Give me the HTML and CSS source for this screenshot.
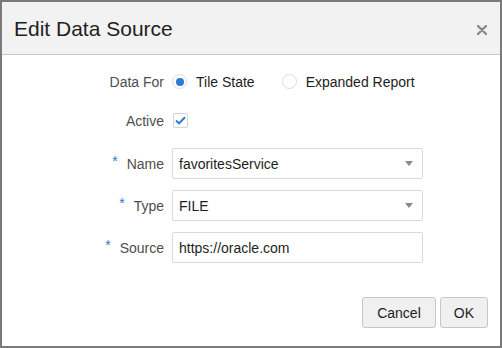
FILE: index.html
```html
<!DOCTYPE html>
<html lang="en">
<head>
    <meta charset="UTF-8">
    <title>Edit Data Source</title>
    <link rel="stylesheet" href="styles.css">
</head>
<body>
    <div class="dialog">
        <div class="dialog-header">
            <h1>Edit Data Source</h1>
            <button class="close-btn" title="Close">
                <svg width="10" height="10" viewBox="0 0 10 10">
                    <path d="M1 1 L9 9 M9 1 L1 9" stroke="#8a8a8a" stroke-width="2.4" stroke-linecap="round"/>
                </svg>
            </button>
        </div>

        <div class="dialog-body">
            <div class="row row-first">
                <label class="field-label">Data For</label>
                <div class="field radio-group">
                    <label class="radio-item"><input type="radio" name="dataFor" checked> Tile State</label>
                    <label class="radio-item"><input type="radio" name="dataFor"> Expanded Report</label>
                </div>
            </div>

            <div class="row row-active">
                <label class="field-label">Active</label>
                <div class="field">
                    <span class="checkbox checked">
                        <svg width="11" height="9" viewBox="0 0 11 9">
                            <path d="M1 4.6 L4 7.4 L10 1.2" fill="none" stroke="#2d7ad3" stroke-width="2"/>
                        </svg>
                    </span>
                </div>
            </div>

            <div class="row row-input">
                <label class="field-label"><span class="required">*</span>Name</label>
                <div class="field">
                    <div class="select-box">
                        <span class="value">favoritesService</span>
                        <span class="arrow"></span>
                    </div>
                </div>
            </div>

            <div class="row row-input">
                <label class="field-label"><span class="required">*</span>Type</label>
                <div class="field">
                    <div class="select-box">
                        <span class="value">FILE</span>
                        <span class="arrow"></span>
                    </div>
                </div>
            </div>

            <div class="row row-input">
                <label class="field-label"><span class="required">*</span>Source</label>
                <div class="field">
                    <div class="select-box">
                        <span class="value">https://oracle.com</span>
                    </div>
                </div>
            </div>
        </div>

        <div class="dialog-footer">
            <button class="btn">Cancel</button>
            <button class="btn btn-ok">OK</button>
        </div>
    </div>
</body>
</html>
```

FILE: styles.css
```css
:root {
    --primary-color: #2d7ad3;
    --label-color: #4e4e4e;
    --text-color: #1e1e1e;
    --border-color: #dadada;
}

* {
    box-sizing: border-box;
}

body {
    margin: 0;
    font-family: 'Liberation Sans', Arial, sans-serif;
    font-size: 14px;
    color: var(--text-color);
    background: #ffffff;
}

.dialog {
    width: 502px;
    height: 348px;
    border: 2px solid #7a7a7a;
    background: #ffffff;
    display: flex;
    flex-direction: column;
}

.dialog-header {
    height: 53px;
    background: #f2f2f2;
    border-bottom: 1px solid #c8c8c8;
    display: flex;
    align-items: center;
    justify-content: space-between;
    padding: 0 13px 0 12px;
}

.dialog-header h1 {
    margin: 0;
    font-size: 21px;
    font-weight: normal;
    color: #1f1f1f;
    padding-top: 2px;
}

.close-btn {
    background: none;
    border: none;
    padding: 0;
    width: 10px;
    height: 10px;
    display: flex;
    cursor: pointer;
    margin-top: 4px;
}

.dialog-body {
    padding-top: 11px;
    display: flex;
    flex-direction: column;
}

.row {
    display: flex;
    align-items: center;
    height: 31px;
}

.row-active {
    margin-top: 8px;
}

.row-input {
    margin-top: 11px;
}

.row-active + .row-input {
    margin-top: 12px;
}

.field-label {
    width: 162px;
    text-align: right;
    color: var(--label-color);
    flex-shrink: 0;
}

.required {
    color: var(--primary-color);
    margin-right: 9px;
    position: relative;
    top: -3px;
}

.field {
    margin-left: 8px;
    display: flex;
    align-items: center;
}

.radio-group {
    gap: 27px;
}

.radio-item {
    display: flex;
    align-items: center;
    gap: 9px;
    color: var(--text-color);
}

.radio-item input {
    appearance: none;
    -webkit-appearance: none;
    margin: 0;
    width: 15px;
    height: 15px;
    border: 1px solid #dcdcdc;
    border-radius: 50%;
    background: #ffffff;
    position: relative;
}

.radio-item input:checked::after {
    content: '';
    position: absolute;
    left: 2.5px;
    top: 2.5px;
    width: 8px;
    height: 8px;
    border-radius: 50%;
    background: var(--primary-color);
}

.checkbox {
    width: 15px;
    height: 15px;
    border: 1px solid #d4d4d4;
    border-radius: 2px;
    display: flex;
    align-items: center;
    justify-content: center;
    margin-left: 1px;
}

.select-box {
    width: 251px;
    height: 31px;
    border: 1px solid var(--border-color);
    border-radius: 2px;
    display: flex;
    align-items: center;
    justify-content: space-between;
    padding: 0 9px 0 6px;
    color: var(--text-color);
}

.arrow {
    width: 0;
    height: 0;
    border-left: 4.5px solid transparent;
    border-right: 4.5px solid transparent;
    border-top: 5px solid #8a8a8a;
}

.dialog-footer {
    margin-top: 34px;
    display: flex;
    justify-content: flex-end;
    gap: 4px;
    padding-right: 12px;
}

.btn {
    height: 31px;
    padding: 0 14px;
    font-family: 'Liberation Sans', Arial, sans-serif;
    font-size: 14px;
    color: var(--text-color);
    background: #f0f0f0;
    border: 1px solid #c6c6c6;
    border-radius: 3px;
    cursor: pointer;
}

.btn-ok {
    padding: 0 13px;
}

.btn:hover {
    background: #e6e6e6;
}
```
